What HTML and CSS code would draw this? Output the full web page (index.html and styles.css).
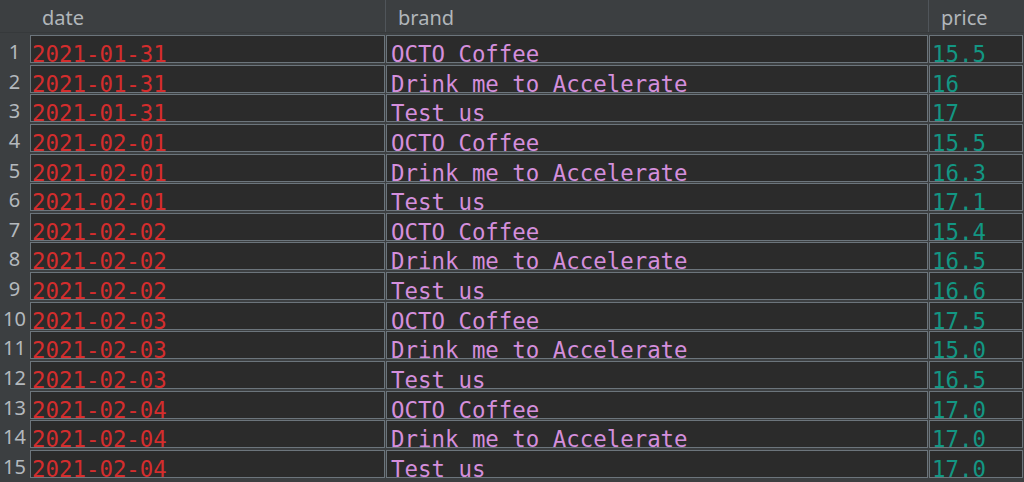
FILE: index.html
```html
<!DOCTYPE html>
<html>
<head>
<meta charset="utf-8">
<link rel="stylesheet" href="styles.css">
</head>
<body>
<div class="frame">
  <div class="head">
    <div class="hcell"></div>
    <div class="hcell">date</div>
    <div class="hcell sep">brand</div>
    <div class="hcell sep">price</div>
  </div>
  <div class="grid">
    <div class="num">1</div><div class="cell date">2021-01-31</div><div class="cell brand">OCTO Coffee</div><div class="cell price">15.5</div>
    <div class="num">2</div><div class="cell date">2021-01-31</div><div class="cell brand">Drink me to Accelerate</div><div class="cell price">16</div>
    <div class="num">3</div><div class="cell date">2021-01-31</div><div class="cell brand">Test us</div><div class="cell price">17</div>
    <div class="num">4</div><div class="cell date">2021-02-01</div><div class="cell brand">OCTO Coffee</div><div class="cell price">15.5</div>
    <div class="num">5</div><div class="cell date">2021-02-01</div><div class="cell brand">Drink me to Accelerate</div><div class="cell price">16.3</div>
    <div class="num">6</div><div class="cell date">2021-02-01</div><div class="cell brand">Test us</div><div class="cell price">17.1</div>
    <div class="num">7</div><div class="cell date">2021-02-02</div><div class="cell brand">OCTO Coffee</div><div class="cell price">15.4</div>
    <div class="num">8</div><div class="cell date">2021-02-02</div><div class="cell brand">Drink me to Accelerate</div><div class="cell price">16.5</div>
    <div class="num">9</div><div class="cell date">2021-02-02</div><div class="cell brand">Test us</div><div class="cell price">16.6</div>
    <div class="num">10</div><div class="cell date">2021-02-03</div><div class="cell brand">OCTO Coffee</div><div class="cell price">17.5</div>
    <div class="num">11</div><div class="cell date">2021-02-03</div><div class="cell brand">Drink me to Accelerate</div><div class="cell price">15.0</div>
    <div class="num">12</div><div class="cell date">2021-02-03</div><div class="cell brand">Test us</div><div class="cell price">16.5</div>
    <div class="num">13</div><div class="cell date">2021-02-04</div><div class="cell brand">OCTO Coffee</div><div class="cell price">17.0</div>
    <div class="num">14</div><div class="cell date">2021-02-04</div><div class="cell brand">Drink me to Accelerate</div><div class="cell price">17.0</div>
    <div class="num">15</div><div class="cell date">2021-02-04</div><div class="cell brand">Test us</div><div class="cell price">17.0</div>
  </div>
</div>
</body>
</html>
```

FILE: styles.css
```css
html, body {
  margin: 0;
  padding: 0;
  background: #3c3f41;
  height: 100%;
  overflow: hidden;
}

.frame {
  width: 1024px;
  height: 482px;
  background: #3c3f41;
}

.head {
  display: grid;
  grid-template-columns: 29px 355px 542px 94px;
  column-gap: 1px;
  height: 33px;
  border-bottom: 1px solid #36393b;
  box-sizing: border-box;
}

.hcell {
  font-family: "Noto Sans", "Open Sans", sans-serif;
  font-size: 20px;
  line-height: 28px;
  padding-top: 4px;
  padding-left: 12px;
  color: #b1b6ba;
}

.hcell:first-child {
  padding-left: 0;
}

.hcell.sep {
  box-shadow: -1px 0 0 #50555a;
}

.grid {
  display: grid;
  grid-template-columns: 29px 355px 542px 94px;
  grid-auto-rows: 28px;
  column-gap: 1px;
  row-gap: 1.64px;
  padding-top: 2px;
}

.num {
  font-family: "Noto Sans", "Open Sans", sans-serif;
  font-size: 20px;
  line-height: 22px;
  padding-top: 6px;
  color: #b4b9bd;
  text-align: center;
}

.cell {
  box-sizing: border-box;
  height: 28px;
  border: 1px solid #6c757c;
  background: #2b2b2b;
  font-family: "DejaVu Sans Mono", "Liberation Mono", monospace;
  font-size: 22.4px;
  line-height: 16px;
  padding: 10px 0 0 2px;
  white-space: nowrap;
}

.date { color: #d42d2d; padding-left: 1px; }
.brand { color: #d48fdc; padding-left: 4px; }
.price { color: #139683; }
```
